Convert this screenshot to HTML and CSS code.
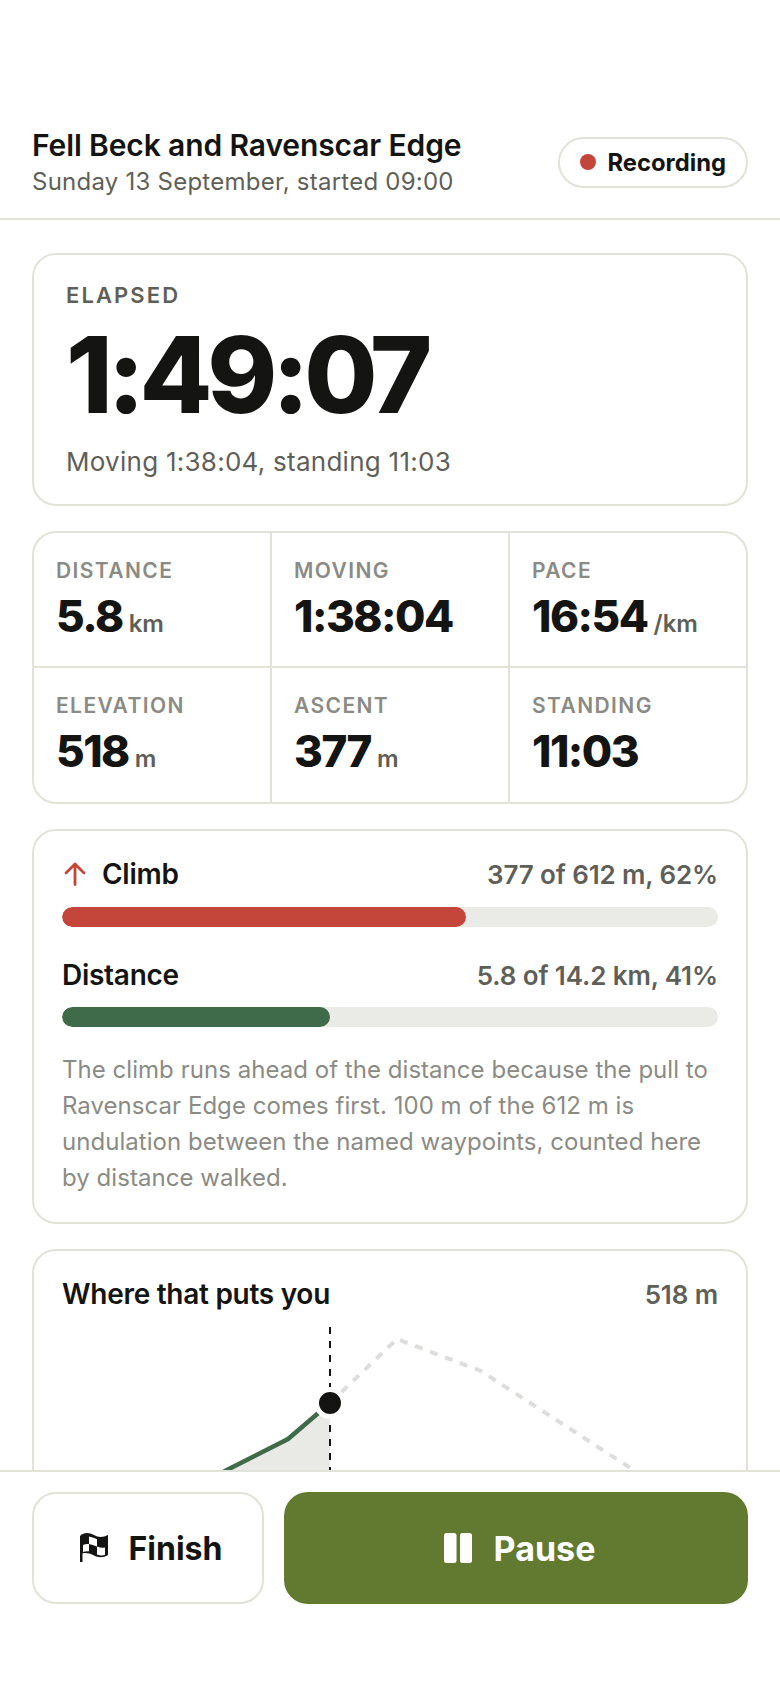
FILE: index.html
```html
<!DOCTYPE html>
<html>
<head>
    <meta charset="utf-8">
    <meta name="viewport" content="width=device-width, initial-scale=1.0">
    <title>Fell Beck and Ravenscar Edge</title>
    <link rel="stylesheet" href="styles.css">
</head>
<body>
    <div class="app">
        <!--header-->
        <header class="top">
            <div class="top-text">
                <h1>Fell Beck and Ravenscar Edge</h1>
                <p>Sunday 13 September, started 09:00</p>
            </div>
            <div class="pill"><span class="dot"></span>Recording</div>
        </header>

        <main class="content">
            <!--elapsed-->
            <section class="card elapsed">
                <div class="elapsed-label">ELAPSED</div>
                <div class="elapsed-time">1:49:07</div>
                <div class="elapsed-sub">Moving 1:38:04, standing 11:03</div>
            </section>

            <!--stats-->
            <section class="card stats">
                <div class="stat">
                    <div class="stat-label">DISTANCE</div>
                    <div class="stat-value">5.8<span class="unit">km</span></div>
                </div>
                <div class="stat">
                    <div class="stat-label">MOVING</div>
                    <div class="stat-value">1:38:04</div>
                </div>
                <div class="stat">
                    <div class="stat-label">PACE</div>
                    <div class="stat-value">16:54<span class="unit">/km</span></div>
                </div>
                <div class="stat">
                    <div class="stat-label">ELEVATION</div>
                    <div class="stat-value">518<span class="unit">m</span></div>
                </div>
                <div class="stat">
                    <div class="stat-label">ASCENT</div>
                    <div class="stat-value">377<span class="unit">m</span></div>
                </div>
                <div class="stat">
                    <div class="stat-label">STANDING</div>
                    <div class="stat-value">11:03</div>
                </div>
            </section>

            <!--progress-->
            <section class="card progress">
                <div class="row">
                    <div class="row-name">
                        <svg class="arrow" width="22" height="24" viewBox="0 0 22 24" fill="none" stroke="#c4453a" stroke-width="2.8" stroke-linecap="round" stroke-linejoin="round">
                            <path d="M11 22.500V2M2 11l9-9 9 9"/>
                        </svg>
                        Climb
                    </div>
                    <div class="row-value">377 of 612 m, 62%</div>
                </div>
                <div class="track"><div class="fill red" style="width: 61.6%"></div></div>
                <div class="row second">
                    <div class="row-name">Distance</div>
                    <div class="row-value">5.8 of 14.2 km, 41%</div>
                </div>
                <div class="track"><div class="fill green" style="width: 40.8%"></div></div>
                <p class="note">The climb runs ahead of the distance because the pull to Ravenscar Edge comes first. 100 m of the 612 m is undulation between the named waypoints, counted here by distance walked.</p>
            </section>

            <!--profile chart-->
            <section class="card chart">
                <div class="row">
                    <div class="row-name">Where that puts you</div>
                    <div class="row-value">518 m</div>
                </div>
                <svg class="profile" width="656" height="300" viewBox="0 0 656 300" fill="none">
                    <path d="M0 250L100 190L163 150L226 118L268 82V300H0Z" fill="#e9e9e5"/>
                    <path d="M268 82L335 18L419 50L573 150L656 204" stroke="#dddddb" stroke-width="4" stroke-dasharray="8 8"/>
                    <path d="M0 250L100 190L163 150L226 118L268 82" stroke="#3f6b4b" stroke-width="4.500"/>
                    <path d="M268 6V300" stroke="#141512" stroke-width="2" stroke-dasharray="7 7"/>
                    <circle cx="268" cy="82" r="13.500" fill="#141512" stroke="#ffffff" stroke-width="5"/>
                </svg>
            </section>
        </main>

        <!--bottom buttons-->
        <footer class="bottom">
            <button class="btn finish">
                <svg width="34" height="34" viewBox="-6 -2 34 34">
                    <path d="M0 29V3C4 -1 9 -.5 14 2C18 4.500 23 4.500 28 2V22C23 25 18 24.500 14 22.500C9 20 5 19.500 2.500 20.500V29Z" fill="#141512"/>
                    <path d="M9 3.500C11 3.800 14 5 17 6.300V13.500C14 12.300 11.500 11.400 9 11Z" fill="#ffffff"/>
                    <path d="M3 12C4.800 11 6.800 10.800 9 11V18.300C6.800 18 4.800 18.200 3 19Z" fill="#ffffff"/>
                    <path d="M17 13.500C20 14.700 22.500 15 25 14.500V21.800C22.500 23 20 22.800 17 21.500Z" fill="#ffffff"/>
                </svg>
                Finish
            </button>
            <button class="btn pause">
                <svg width="36" height="30" viewBox="0 0 36 30" fill="#ffffff">
                    <rect x="7" y="0" width="12.500" height="30" rx="2.500"/>
                    <rect x="23" y="0" width="12" height="30" rx="2.500"/>
                </svg>
                Pause
            </button>
        </footer>
    </div>
</body>
</html>
```

FILE: styles.css
```css
* {
    box-sizing: border-box;
}
body {
    margin: 0;
    background-color: #ffffff;
    color: #141512;
    font-family: "Inter", "Liberation Sans", sans-serif;
}
.app {
    height: 1688px;
    display: flex;
    flex-direction: column;
    overflow: hidden;
}
.top {
    display: flex;
    align-items: center;
    justify-content: space-between;
    padding: 127px 32px 21px;
    border-bottom: 2px solid #e2e2da;
}
.top h1 {
    margin: 0;
    font-size: 30px;
    line-height: 36px;
    font-weight: 600;
    letter-spacing: -0.12px;
}
.top p {
    margin: 4px 0 0;
    font-size: 24px;
    line-height: 30px;
    letter-spacing: 0.24px;
    color: #5f5f59;
}
.pill {
    display: flex;
    align-items: center;
    gap: 11px;
    height: 51px;
    padding: 0 20px;
    border: 2px solid #e2e2da;
    border-radius: 26px;
    font-size: 23.8px;
    font-weight: 700;
}
.dot {
    width: 16px;
    height: 16px;
    border-radius: 50%;
    background-color: #c4453a;
}
.content {
    flex: 1;
    min-height: 0;
    overflow: hidden;
    display: flex;
    flex-direction: column;
    gap: 25px;
    padding: 33px 32px 0;
}
.card {
    flex-shrink: 0;
    border: 2px solid #e2e2da;
    border-radius: 24px;
    background-color: #ffffff;
}
.elapsed {
    height: 253px;
    padding: 26px 32px 0;
}
.elapsed-label {
    font-size: 22px;
    line-height: 28px;
    font-weight: 600;
    letter-spacing: 2.1px;
    color: #5f5f59;
}
.elapsed-time {
    font-size: 106px;
    line-height: 116px;
    font-weight: 800;
    letter-spacing: -5.3px;
    margin-top: 8px;
}
.elapsed-sub {
    font-size: 26px;
    line-height: 32px;
    letter-spacing: 0.26px;
    color: #5f5f59;
    margin-top: 13px;
}
.stats {
    height: 273px;
    display: grid;
    grid-template-columns: 238px 238px 1fr;
    grid-template-rows: 1fr 1fr;
    overflow: hidden;
}
.stat {
    padding: 24px 22px 0;
    border-right: 2px solid #e2e2da;
    border-bottom: 2px solid #e2e2da;
}
.stat:nth-child(3n) {
    border-right: none;
}
.stat:nth-child(n+4) {
    border-bottom: none;
}
.stat-label {
    font-size: 21px;
    line-height: 28px;
    font-weight: 600;
    letter-spacing: 1.4px;
    color: #8b8b85;
}
.stat-value {
    font-size: 44px;
    line-height: 52px;
    font-weight: 800;
    letter-spacing: -1.5px;
    margin-top: 5px;
}
.unit {
    margin-left: 6px;
    font-size: 24px;
    font-weight: 600;
    letter-spacing: 0;
    color: #5f5f59;
}
.progress {
    height: 395px;
    padding: 28px 28px 0;
}
.chart {
    height: 500px;
    padding: 28px 28px 0;
}
.row {
    display: flex;
    align-items: center;
    justify-content: space-between;
    height: 30px;
    margin-bottom: 18px;
}
.row.second {
    margin-top: 33px;
    margin-bottom: 17px;
}
.row-name {
    display: flex;
    align-items: center;
    gap: 16px;
    font-size: 28px;
    font-weight: 600;
    letter-spacing: -0.28px;
}
.row-value {
    font-size: 26px;
    font-weight: 600;
    letter-spacing: -0.12px;
    color: #5f5f59;
}
.arrow {
    margin-left: 2px;
    flex-shrink: 0;
}
.track {
    height: 20px;
    border-radius: 10px;
    background-color: #eaeae6;
    overflow: hidden;
}
.fill {
    height: 100%;
    border-radius: 10px;
}
.red {
    background-color: #c4453a;
}
.green {
    background-color: #3f6b4b;
}
.note {
    margin: 25px 0 0;
    font-size: 24px;
    line-height: 36px;
    letter-spacing: 0.04px;
    color: #8b8b85;
}
.chart .row {
    margin-bottom: 0;
}
.profile {
    display: block;
    margin-top: 12px;
}
.bottom {
    flex-shrink: 0;
    display: flex;
    gap: 20px;
    height: 218px;
    padding: 20px 32px 0;
    border-top: 2px solid #e2e2da;
    background-color: #ffffff;
}
.btn {
    display: flex;
    align-items: center;
    justify-content: center;
    gap: 21px;
    height: 112px;
    border-radius: 24px;
    font-family: inherit;
    font-size: 32px;
    font-weight: 700;
}
.finish {
    width: 232px;
    padding: 0;
    border: 2px solid #e2e2da;
    background-color: #ffffff;
    color: #141512;
}
.pause {
    flex: 1;
    padding: 0;
    border: none;
    font-size: 34px;
    background-color: #617a2f;
    color: #ffffff;
}
```
